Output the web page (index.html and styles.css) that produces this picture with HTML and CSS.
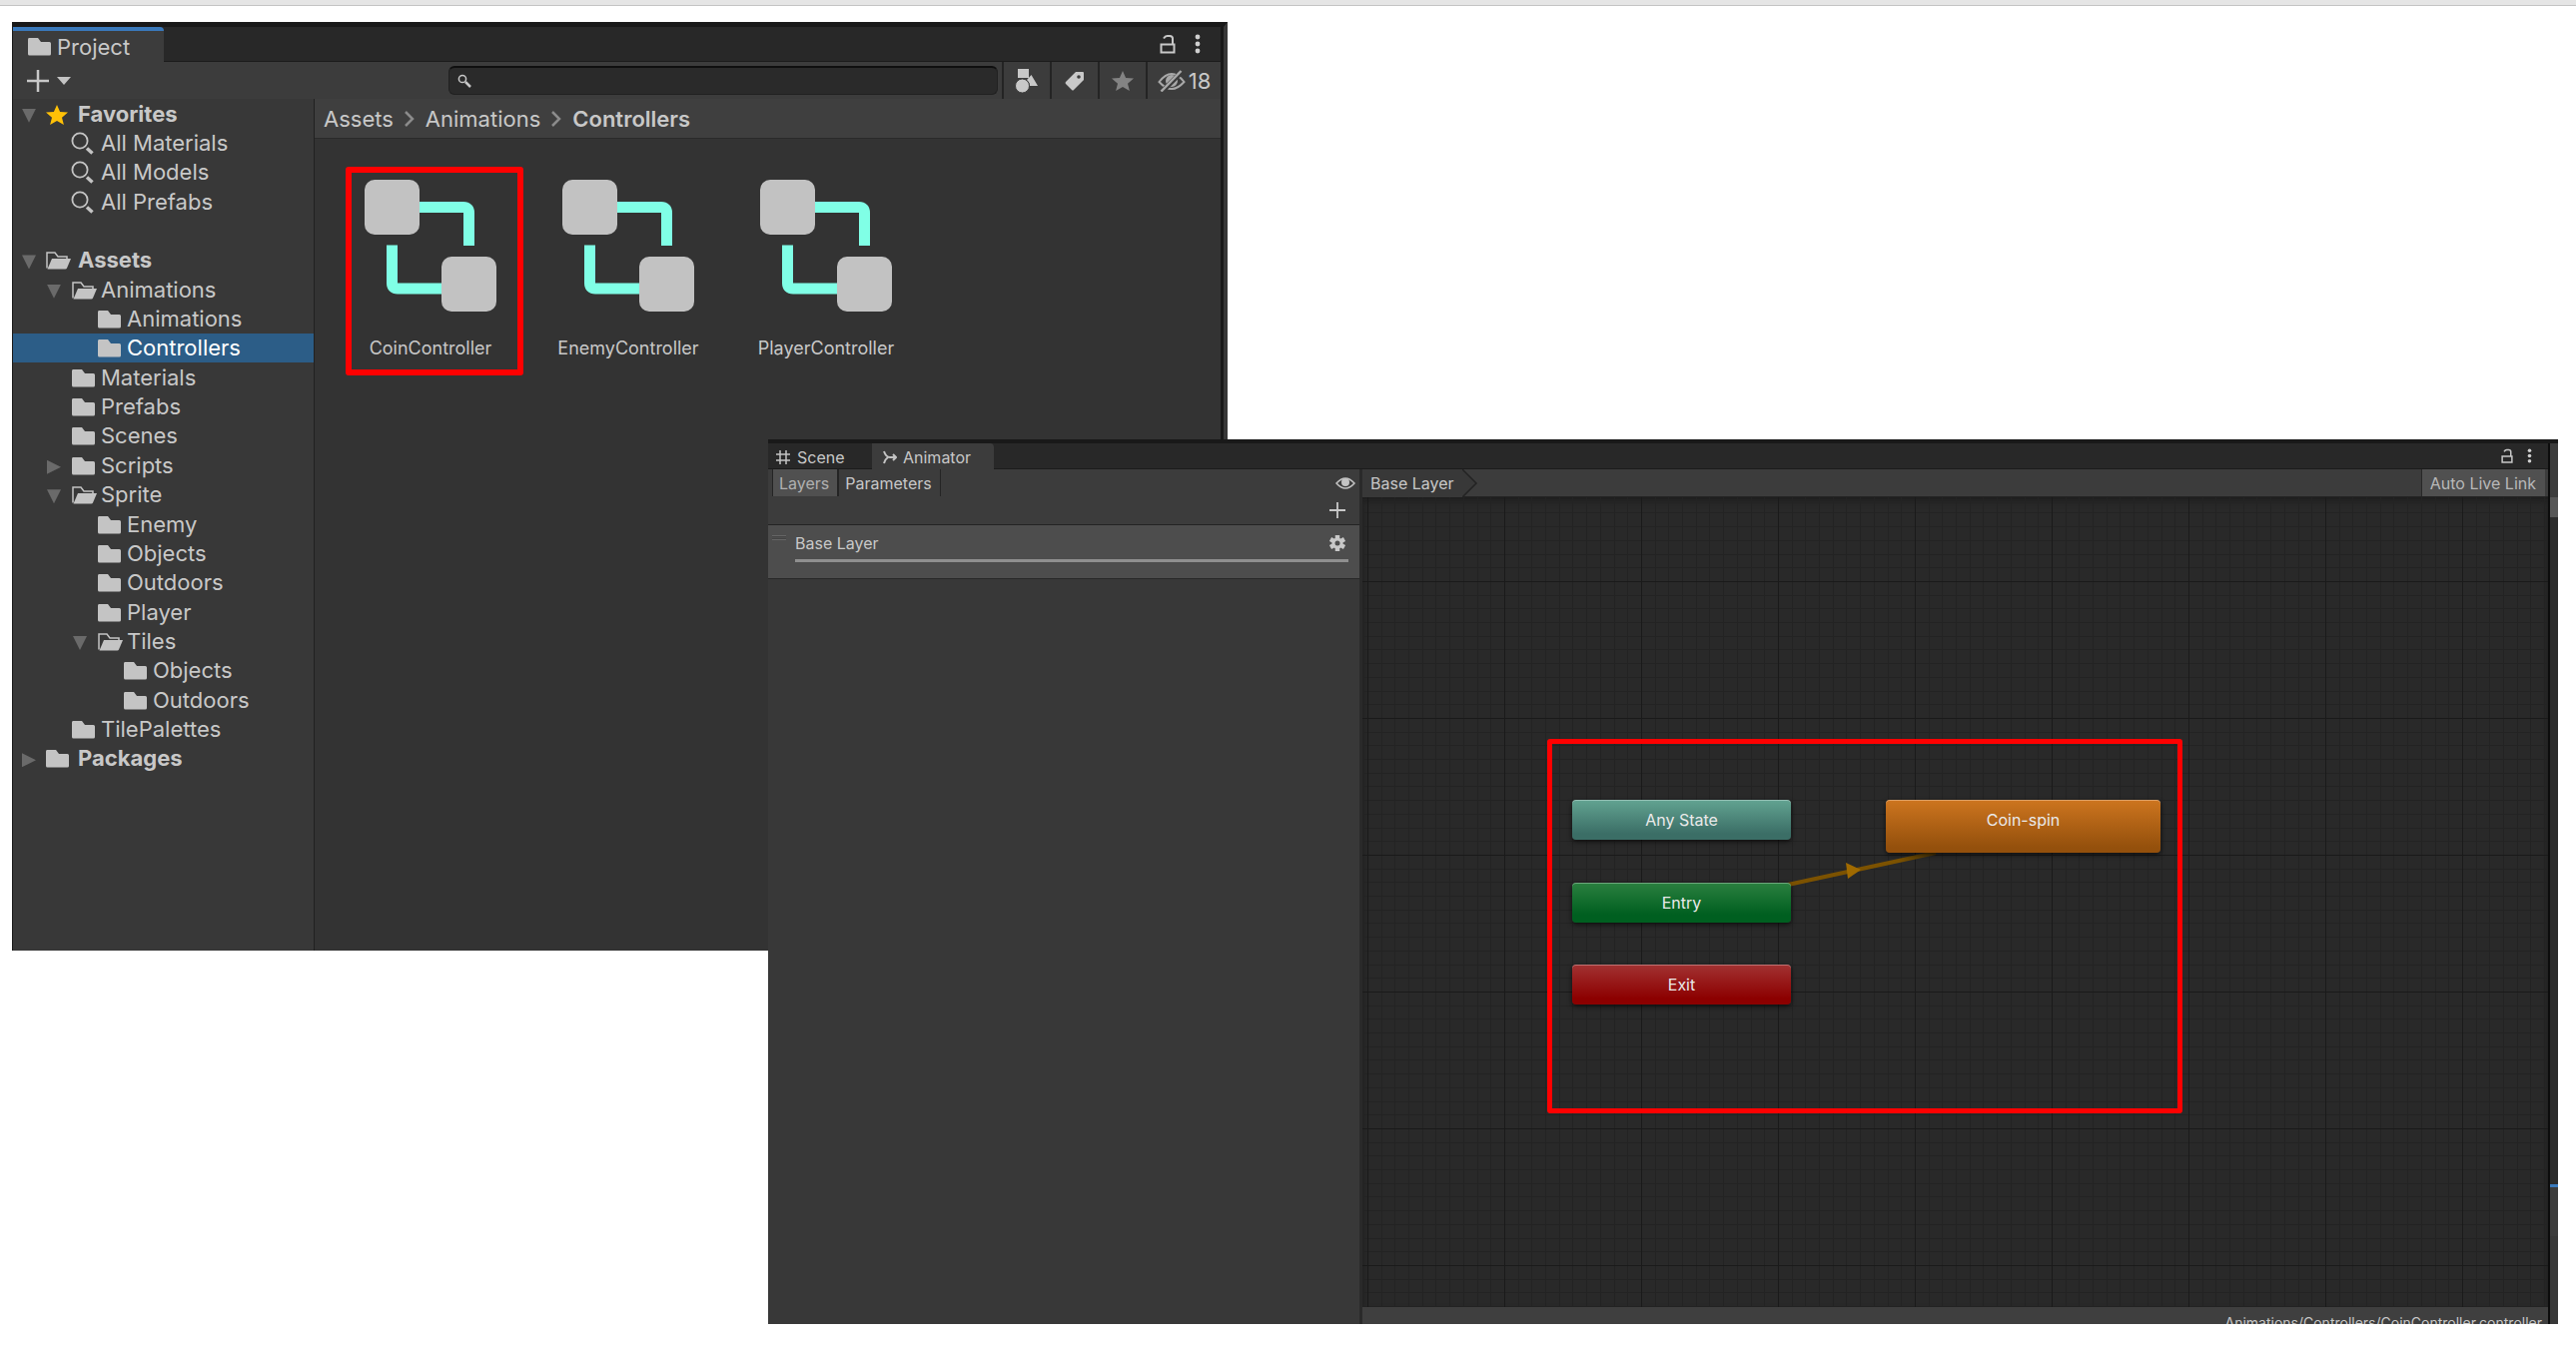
FILE: index.html
```html
<!DOCTYPE html>
<html lang="en">
<head>
<meta charset="utf-8">
<title>Project and Animator</title>
<link rel="stylesheet" href="styles.css">
</head>
<body>
<svg class="defs" aria-hidden="true">
  <symbol id="folder" viewBox="0 0 26 20"><path d="M2 1h9l3 4h8.500q1.500 0 1.500 1.500v10.500q0 1.500-1.500 1.500h-20q-1.500 0-1.500-1.500v-14.500q0-1.500 1-1.500z" fill="#c4c4c4"/></symbol>
  <symbol id="open" viewBox="0 0 26 20"><path d="M2 17.500V2h8l3 4h9v3" fill="none" stroke="#c4c4c4" stroke-width="1.500"/><path d="M7 8h19l-4 9.500q-.5 1-1.500 1h-18z" fill="#c4c4c4"/></symbol>
  <symbol id="find" viewBox="0 0 26 24"><circle cx="9" cy="9" r="7.600" fill="none" stroke="#c4c4c4" stroke-width="1.800"/><path d="M16 16.500l5.500 5" stroke="#c4c4c4" stroke-width="3.500"/></symbol>
  <symbol id="star" viewBox="0 0 22 20"><path d="M11 0l3.100 7 7.900.6-6 5.100 1.900 7.300-6.900-4-6.900 4 1.900-7.300-6-5.100 7.900-.6z"/></symbol>
  <symbol id="lock" viewBox="0 0 16 20"><path d="M1.500 10.500h13v8h-13zM13 10V4.500q0-2.500-3-2.500h-2.500q-2 0-3.500 2.500" fill="none" stroke="#c8c8c8" stroke-width="2"/></symbol>
  <symbol id="dots" viewBox="0 0 6 20"><g fill="#d0d0d0"><circle cx="3" cy="3" r="2.400"/><circle cx="3" cy="10" r="2.400"/><circle cx="3" cy="17" r="2.400"/></g></symbol>
  <symbol id="plus" viewBox="0 0 22 22"><path d="M11 0v22M0 11h22" stroke="#c8c8c8" stroke-width="2.500"/></symbol>
  <symbol id="chev" viewBox="0 0 12 16"><path d="M2 1l7 7-7 7" fill="none" stroke="#8c8c8c" stroke-width="2.500"/></symbol>
  <symbol id="ctrl" viewBox="0 0 132 132"><path d="M55 28h44q5.500 0 5.500 5.500v33M27.500 66v38q0 5.500 5.500 5.500h44" transform="translate(0 -.5)" fill="none" stroke="#80ffe6" stroke-width="11"/><rect x="0" y="0" width="55" height="55" rx="10" fill="#c2c2c2"/><rect x="77" y="77" width="55" height="55" rx="10" fill="#c2c2c2"/></symbol>
</svg>
<div class="strip"></div>

<section class="window project">
  <header class="tabbar">
    <button class="tab current"><svg width="26" height="20"><use href="#folder"/></svg>Project</button>
    <div class="corner"><svg width="16" height="20"><use href="#lock"/></svg><svg width="6" height="20"><use href="#dots"/></svg></div>
  </header>
  <div class="toolbar">
    <button class="add" aria-label="Add"><svg width="22" height="22"><use href="#plus"/></svg><svg width="14" height="8" viewBox="0 0 14 8"><path d="M0 0h14l-7 8z" fill="#c4c4c4"/></svg></button>
    <label class="search"><svg width="14" height="14" viewBox="0 0 14 14"><g fill="none" stroke="#c8c8c8"><circle cx="5" cy="5" r="3.600" stroke-width="1.500"/><path d="M8 8l5 5" stroke-width="2.500"/></g></svg><input type="text" aria-label="Search"></label>
    <button class="tool" aria-label="Filter by type"><svg width="24" height="24" viewBox="0 0 24 24" fill="#c8c8c8"><path d="M3 0h11v9h-11zM16.500 6l6.500 11h-8q-.5-4-3-6z"/><circle cx="7.500" cy="17" r="7" stroke="#3c3c3c" stroke-width="1"/></svg></button>
    <button class="tool" aria-label="Filter by label"><svg width="20" height="20" viewBox="0 0 20 20"><path d="M11 1h7q1 0 1 1v7L9 19q-1 1-2 0L1 13q-1-1 0-2z" fill="#c8c8c8"/><circle cx="14" cy="6" r="1.800" fill="#3c3c3c"/></svg></button>
    <button class="tool" aria-label="Favorites"><svg width="22" height="20" fill="#838383"><use href="#star"/></svg></button>
    <button class="tool hidden-count"><svg width="28" height="22" viewBox="0 0 28 22"><g fill="none" stroke="#a8a8a8" stroke-width="2"><path d="M1.500 12q12.500-16 25 0q-12.500 14-25 0z"/><circle cx="14" cy="11" r="5" fill="#a8a8a8"/><path d="M5 21L24 2" stroke="#3c3c3c" stroke-width="5"/><path d="M3.500 21.500L23.500 1" stroke-width="2.500"/></g></svg>18</button>
  </div>
  <div class="body">
    <ul class="tree">
      <li class="root down"><svg width="26" height="20" viewBox="-1 0 26 20" fill="#ffc107"><use href="#star" width="22" height="20"/></svg>Favorites</li>
      <li class="l1"><svg width="26" height="24"><use href="#find"/></svg>All Materials</li>
      <li class="l1"><svg width="26" height="24"><use href="#find"/></svg>All Models</li>
      <li class="l1"><svg width="26" height="24"><use href="#find"/></svg>All Prefabs</li>
      <li aria-hidden="true"></li>
      <li class="root down"><svg width="26" height="20"><use href="#open"/></svg>Assets</li>
      <li class="l1 down"><svg width="26" height="20"><use href="#open"/></svg>Animations</li>
      <li class="l2"><svg width="26" height="20"><use href="#folder"/></svg>Animations</li>
      <li class="l2 selected"><svg width="26" height="20"><use href="#folder"/></svg>Controllers</li>
      <li class="l1"><svg width="26" height="20"><use href="#folder"/></svg>Materials</li>
      <li class="l1"><svg width="26" height="20"><use href="#folder"/></svg>Prefabs</li>
      <li class="l1"><svg width="26" height="20"><use href="#folder"/></svg>Scenes</li>
      <li class="l1 right"><svg width="26" height="20"><use href="#folder"/></svg>Scripts</li>
      <li class="l1 down"><svg width="26" height="20"><use href="#open"/></svg>Sprite</li>
      <li class="l2"><svg width="26" height="20"><use href="#folder"/></svg>Enemy</li>
      <li class="l2"><svg width="26" height="20"><use href="#folder"/></svg>Objects</li>
      <li class="l2"><svg width="26" height="20"><use href="#folder"/></svg>Outdoors</li>
      <li class="l2"><svg width="26" height="20"><use href="#folder"/></svg>Player</li>
      <li class="l2 down"><svg width="26" height="20"><use href="#open"/></svg>Tiles</li>
      <li class="l3"><svg width="26" height="20"><use href="#folder"/></svg>Objects</li>
      <li class="l3"><svg width="26" height="20"><use href="#folder"/></svg>Outdoors</li>
      <li class="l1"><svg width="26" height="20"><use href="#folder"/></svg>TilePalettes</li>
      <li class="root right"><svg width="26" height="20"><use href="#folder"/></svg>Packages</li>
    </ul>
    <div class="content">
      <nav class="crumbs"><a href="#">Assets</a><svg width="12" height="16"><use href="#chev"/></svg><a href="#">Animations</a><svg width="12" height="16"><use href="#chev"/></svg><a href="#" class="here">Controllers</a></nav>
      <div class="assets">
        <figure class="marked"><svg width="132" height="132"><use href="#ctrl"/></svg><figcaption>CoinController</figcaption></figure>
        <figure><svg width="132" height="132"><use href="#ctrl"/></svg><figcaption>EnemyController</figcaption></figure>
        <figure><svg width="132" height="132"><use href="#ctrl"/></svg><figcaption>PlayerController</figcaption></figure>
      </div>
    </div>
  </div>
</section>

<section class="window animator">
  <div class="main">
    <header class="tabbar">
      <button class="tab"><svg width="14" height="14" viewBox="0 0 14 14"><path d="M4 0v14M10 0v14M0 4h14M0 10h14" stroke="#c4c4c4" stroke-width="1.500"/></svg>Scene</button>
      <button class="tab current"><svg width="14" height="14" viewBox="0 0 14 14"><path d="M1 1q2 6 6 6h6M1 13q1-4 4-6M10 4l3 3-3 3" fill="none" stroke="#c4c4c4" stroke-width="2"/></svg>Animator</button>
      <div class="corner"><svg width="12" height="15"><use href="#lock"/></svg><svg width="5" height="15"><use href="#dots"/></svg></div>
    </header>
    <div class="split">
      <div class="side">
        <div class="modes">
          <button class="on">Layers</button><button>Parameters</button>
          <svg class="eye" width="20" height="12" viewBox="0 0 20 12"><path d="M1 6q9-10 18 0q-9 10-18 0z" fill="none" stroke="#c4c4c4" stroke-width="1.500"/><circle cx="10" cy="5" r="4" fill="#c4c4c4"/></svg>
        </div>
        <div class="addrow"><button aria-label="Add layer"><svg width="16" height="16"><use href="#plus"/></svg></button></div>
        <div class="layer">
          <svg width="14" height="8" viewBox="0 0 14 8"><path d="M0 1.500h14M0 5.500h14" stroke="#666"/><path d="M0 2.500h14M0 4.500h14" stroke="#444"/></svg>
          <div class="layer-main">
            <div class="layer-name"><span>Base Layer</span><button aria-label="Layer settings"><svg width="16" height="16" viewBox="0 0 16 16"><g stroke="#c8c8c8" stroke-width="4.500"><path d="M8 0v16M1 4l14 8M1 12L15 4"/></g><circle cx="8" cy="8" r="5.500" fill="#c8c8c8"/><circle cx="8" cy="8" r="2.500" fill="#4d4d4d"/></svg></button></div>
            <div class="weight"></div>
          </div>
        </div>
      </div>
      <div class="graph">
        <div class="graphbar"><span class="crumb">Base Layer</span><svg width="16" height="28" viewBox="0 0 16 28"><path d="M0 0l14 14L0 28z" fill="#383838"/><path d="M0 0l14 14L0 28" fill="none" stroke="#232323" stroke-width="1.500"/></svg><button>Auto Live Link</button></div>
        <div class="canvas">
          <svg class="grid" width="100%" height="100%">
            <defs>
              <pattern id="cells" x="5" y="84" width="137" height="137" patternUnits="userSpaceOnUse"><path d="M14.500 0v137M27.500 0v137M41.500 0v137M55.500 0v137M68.500 0v137M82.500 0v137M96.500 0v137M110.500 0v137M123.500 0v137M0 14.500h137M0 27.500h137M0 41.500h137M0 55.500h137M0 68.500h137M0 82.500h137M0 96.500h137M0 110.500h137M0 123.500h137" stroke="#232323"/><path d="M.5 0v137M0 .5h137" stroke="#1a1a1a"/></pattern>
              <linearGradient id="fade"><stop offset=".75" stop-color="#7c5200"/><stop offset="1" stop-color="#4a3408"/></linearGradient>
            </defs>
            <rect width="100%" height="100%" fill="url(#cells)"/>
            <path d="M426 388L574 356" stroke="url(#fade)" stroke-width="4"/>
            <path d="M484 366l15 7-13 9z" fill="#a06a00"/>
          </svg>
          <div class="node any">Any State</div>
          <div class="node entry">Entry</div>
          <div class="node exit">Exit</div>
          <div class="node coin">Coin-spin</div>
          <div class="frame"></div>
        </div>
        <footer>Animations/Controllers/CoinController.controller</footer>
      </div>
    </div>
  </div>
  <div class="edge"><i class="head"></i><i class="thumb"></i><i class="track"></i><i class="next"></i><i class="rest"></i></div>
</section>
</body>
</html>
```
FILE: styles.css
```css
* { box-sizing: border-box; }
body { margin: 0; min-height: 100vh; background: #fff; color: #c8c8c8; font-family: Inter, "Liberation Sans", sans-serif; position: relative; }
svg { display: block; flex: none; }
button { border: 0; margin: 0; padding: 0; background: none; color: inherit; font: inherit; display: flex; align-items: center; }
a { color: inherit; text-decoration: none; }
ul { list-style: none; margin: 0; padding: 0; }
.defs { position: absolute; width: 0; height: 0; }
.strip { height: 6px; background: #e5e5e5; border-bottom: 1px solid #c4c4c4; }

.window { position: absolute; display: flex; }
.tabbar { display: flex; background: #282828; border-bottom: 1px solid #1c1c1c; }
.tab.current { background: #3c3c3c; }
.corner { margin-left: auto; display: flex; align-items: center; }

.project { left: 12px; top: 22px; width: 1217px; height: 930px; flex-direction: column; background: #383838; border-left: 1px solid #191919; border-top: 5px solid #191919; border-right: 4px solid #383838; font-size: 22px; }
.project > * { border-right: 3px solid #191919; }
.project .tabbar { height: 35px; }
.project .tab { width: 151px; margin-bottom: -1px; padding-left: 14px; gap: 4px; border-top: 4px solid #3a79bb; border-radius: 0 4px 0 0; }
.project .corner { gap: 19px; padding-right: 20px; }
.toolbar { display: flex; height: 37px; background: #3c3c3c; align-items: stretch; }
.add { gap: 8px; padding-left: 14px; }
.search { display: flex; align-items: center; gap: 8px; margin: 4px 4px 4px auto; width: 550px; padding-left: 8px; background: #2a2a2a; border: 1px solid #212121; border-top: 2px solid #0f0f0f; border-radius: 6px; }
.search input { flex: 1; min-width: 0; background: none; border: 0; outline: 0; color: inherit; font: inherit; }
.tool { width: 48px; justify-content: center; border-left: 2px solid #242424; }
.tool.hidden-count { width: 75px; gap: 3px; }
.body { flex: 1; display: flex; min-height: 0; }
.tree { width: 301px; height: 675px; display: grid; grid-auto-rows: 1fr; flex: none; }
.tree li { display: flex; align-items: center; gap: 4px; line-height: 28px; padding-left: 32px; }
.tree li svg { margin-top: 2px; }
.tree .root { font-weight: 700; gap: 7px; }
.tree .l1 { padding-left: 58px; }
.tree .l2 { padding-left: 84px; }
.tree .l3 { padding-left: 110px; }
.tree .selected { background: #2c5d87; color: #fff; }
.tree .down::before, .tree .right::before { content: ""; width: 14px; height: 14px; margin: 4px 6px 0 -24px; background: #6a6a6a; clip-path: polygon(0 0, 100% 0, 50% 100%); }
.tree .root::before { margin-left: -23px; margin-right: 2px; }
.tree .right::before { clip-path: polygon(0 0, 100% 50%, 0 100%); }
.content { flex: 1; min-width: 0; background: #333; border-left: 1px solid #212121; }
.crumbs { display: flex; align-items: center; gap: 10px; height: 40px; padding: 1px 0 0 9px; background: #3f3f3f; border-bottom: 1px solid #2a2a2a; }
.crumbs .here { font-weight: 600; }
.assets { display: flex; gap: 20px; padding: 28px 31px; }
figure { margin: 0; width: 178px; height: 209px; padding: 13px 8px 0 0; display: flex; flex-direction: column; align-items: center; font-size: 18px; }
figure.marked { outline: 6px solid #f00; outline-offset: -6px; border-radius: 3px; }
figcaption { margin-top: 26px; line-height: 22px; white-space: nowrap; }

.animator { left: 769px; top: 440px; width: 1792px; height: 886px; background: #383838; border-top: 4px solid #191919; font-size: 16px; }
.main { flex: 1; min-width: 0; display: flex; flex-direction: column; border-right: 2px solid #0c0c0c; }
.animator .tabbar { height: 26px; }
.animator .tab { width: 104px; padding: 2px 0 0 8px; gap: 7px; }
.animator .tab.current { width: 122px; padding-left: 11px; margin-bottom: -1px; gap: 6px; border-radius: 0 4px 0 0; }
.animator .corner { gap: 14px; padding-right: 16px; }
.split { flex: 1; display: flex; min-height: 0; }
.side { width: 595px; border-right: 3px solid #2a2a2a; }
.modes { display: flex; height: 27px; background: #3c3c3c; padding-left: 4px; }
.modes button { border: 0 solid #242424; border-right-width: 1px; padding: 0 8px 0 6px; }
.modes button.on { background: #505050; border-width: 0 2px 0 1px; color: #b0b0b0; }
.eye { margin: 8px 4px 0 auto; }
.addrow { height: 29px; background: #3c3c3c; border-bottom: 1px solid #232323; display: flex; align-items: center; justify-content: flex-end; padding-right: 14px; }
.layer { display: flex; height: 54px; background: #4d4d4d; border-bottom: 1px solid #282828; padding: 9px 11px 0 4px; gap: 9px; }
.layer-main { flex: 1; }
.layer-name { display: flex; align-items: center; justify-content: space-between; height: 18px; }
.layer-name button { margin-right: 3px; }
.weight { height: 3px; margin-top: 7px; background: #8f8f8f; }
.graph { flex: 1; min-width: 0; display: flex; flex-direction: column; }
.graphbar { height: 28px; flex: none; background: #3c3c3c; display: flex; align-items: center; border-bottom: 1px solid #232323; }
.graphbar .crumb { padding: 0 8px; background: #383838; line-height: 28px; }
.graphbar button { margin: 0 3px 0 auto; height: 27px; padding: 0 9px 0 8px; background: #505050; border-left: 1px solid #282828; color: #b8b8b8; }
.canvas { flex: 1; position: relative; background: #292929; overflow: hidden; box-shadow: inset 0 4px 6px #1e1e1e; }
.grid { position: absolute; inset: 0; }
.node { position: absolute; left: 210px; width: 219px; height: 40px; border-radius: 4px; text-align: center; line-height: 40px; color: #eaeaea; box-shadow: inset 0 1px 0 #ffffff50, 0 2px 5px #000000a0; }
.any { top: 303px; background: linear-gradient(#62a391, #3b6e66 85%); }
.entry { top: 386px; background: linear-gradient(#2b8040, #005f20 80%); }
.exit { top: 468px; background: linear-gradient(#a23232, #8c0000 85%); }
.coin { left: 524px; top: 303px; width: 275px; height: 53px; background: linear-gradient(#cd751f, #94500c 90%); }
.frame { position: absolute; left: 185px; top: 242px; width: 636px; height: 375px; border: 5px solid #f00; border-radius: 3px; }
footer { height: 17px; flex: none; overflow: hidden; background: #3f3f3f; text-align: right; padding: 7px 6px 0 0; font-size: 14px; line-height: 18px; }
.edge { width: 8px; display: flex; flex-direction: column; }
.edge .head { height: 54px; background: #3c3c3c; }
.edge .thumb { height: 20px; background: #565656; }
.edge .track { flex: 1; background: #2b2b2b; }
.edge .next { height: 52px; background: #3c3c3c; border-top: 3px solid #3a79bb; }
.edge .rest { height: 88px; background: #383838; }
```
